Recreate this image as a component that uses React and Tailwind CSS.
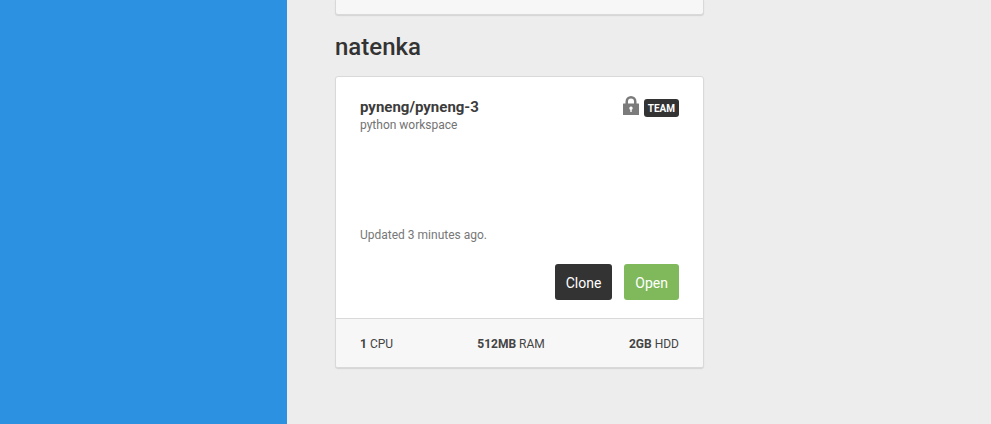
function LockIcon() {
  return (
    <svg viewBox="0 0 16 19" className="h-[19px] w-4" role="img" aria-label="Private">
      <path
        fill="#7b7b7b"
        fillRule="evenodd"
        d="M2.500 7.500V5.500a5.500 5.500 0 0 1 11 0v2H15.500a.5.500 0 0 1 .5.500v10.500a.5.500 0 0 1-.5.500H.5a.5.500 0 0 1-.5-.5V8a.5.500 0 0 1 .5-.5zM5 7.500h6v-2a3 3 0 0 0-6 0zM6.300 12.300a1.700 1.700 0 0 0 1 1.500V16h1.400v-2.200a1.700 1.700 0 1 0-2.400-1.500z"
      />
    </svg>
  );
}

function Stat({ value, label }) {
  return (
    <li>
      <strong className="font-bold">{value}</strong> {label}
    </li>
  );
}

const cardFrame = "max-w-[369px] rounded-[3px] border border-[#d9d9d9] shadow-[0_1px_1px_#d4d4d4]";
const buttonBase = "h-9 rounded-[3px] px-[11px] pt-0.5 text-sm text-white";

function WorkspaceCard() {
  return (
    <article className={`${cardFrame} overflow-hidden bg-white`}>
      <div className="px-6 pt-[19px] pb-[18px]">
        <header className="flex h-[38px] items-start justify-between">
          <div>
            <h3 className="text-[15px] leading-[22px] font-bold text-[#3c3c3c]">pyneng/pyneng-3</h3>
            <p className="text-xs leading-[14px] text-[#737373]">python workspace</p>
          </div>
          <div className="flex items-end gap-[5px]">
            <LockIcon />
            <span className="-mb-0.5 h-[18px] rounded-[3px] bg-[#333] px-1 text-[10px] leading-[19px] font-bold text-white">
              TEAM
            </span>
          </div>
        </header>
        <p className="mt-[92px] text-xs leading-[18px] text-[#777]">Updated 3 minutes ago.</p>
        <div className="mt-5 flex justify-end gap-3">
          <button type="button" className={`${buttonBase} bg-[#333]`}>
            Clone
          </button>
          <button type="button" className={`${buttonBase} bg-[#80b95c]`}>
            Open
          </button>
        </div>
      </div>
      <ul className="flex h-[49px] items-center justify-between border-t border-[#d9d9d9] bg-[#f7f7f7] px-6 pt-0.5 text-xs text-[#444]">
        <Stat value="1" label="CPU" />
        <Stat value="512MB" label="RAM" />
        <Stat value="2GB" label="HDD" />
      </ul>
    </article>
  );
}

export default function App() {
  return (
    <div className="flex min-h-screen bg-[#ededed] font-[Roboto,sans-serif]">
      <aside className="w-[287px] shrink-0 bg-[#2c91e0]" />
      <main className="min-w-0 grow px-12">
        <div className={`${cardFrame} h-[15px] rounded-t-none border-t-0 bg-[#f7f7f7]`} />
        <h2 className="pt-[18px] pb-3.5 text-2xl leading-[29px] font-medium text-[#333]">natenka</h2>
        <WorkspaceCard />
      </main>
    </div>
  );
}
